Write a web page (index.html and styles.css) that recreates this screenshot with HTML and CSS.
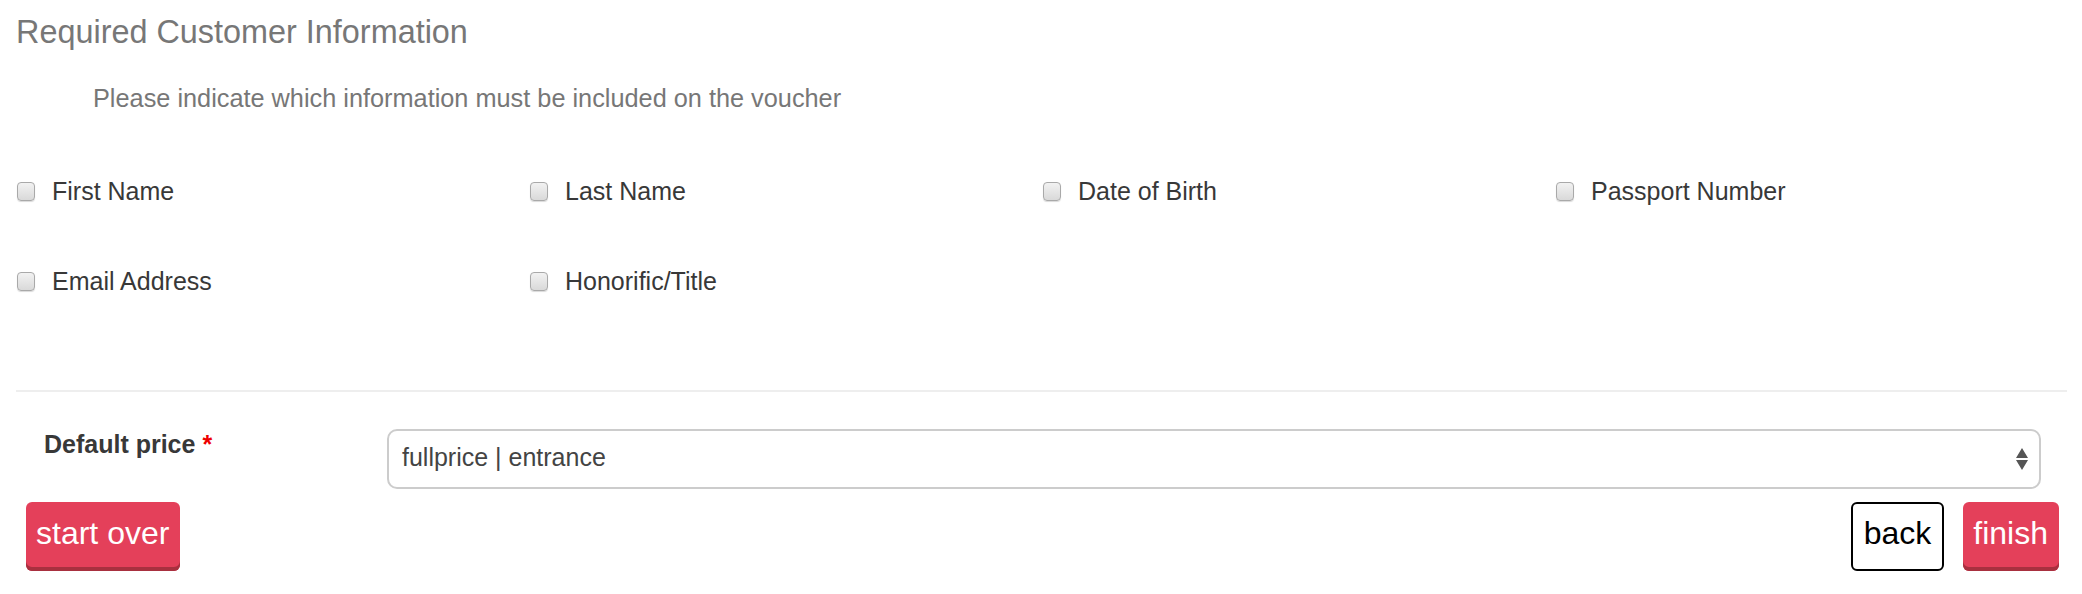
FILE: index.html
```html
<!DOCTYPE html>
<html>
<head>
<meta charset="utf-8">
<link rel="stylesheet" href="styles.css">
</head>
<body>
<div class="page">
  <h3 class="title">Required Customer Information</h3>
  <p class="subtitle">Please indicate which information must be included on the voucher</p>
  <div class="fields">
    <label class="field"><input type="checkbox" class="cb"><span>First Name</span></label>
    <label class="field"><input type="checkbox" class="cb"><span>Last Name</span></label>
    <label class="field"><input type="checkbox" class="cb"><span>Date of Birth</span></label>
    <label class="field"><input type="checkbox" class="cb"><span>Passport Number</span></label>
    <label class="field"><input type="checkbox" class="cb"><span>Email Address</span></label>
    <label class="field"><input type="checkbox" class="cb"><span>Honorific/Title</span></label>
  </div>
  <hr class="divider">
  <div class="price-row">
    <div class="price-label">Default price <span class="req">*</span></div>
    <div class="select">
      <span class="select-text">fullprice | entrance</span>
      <svg class="arrows" width="12" height="22" viewBox="0 0 12 22"><path d="M6 0 L12 10 L0 10 Z M0 12 L12 12 L6 22 Z" fill="#555"/></svg>
    </div>
  </div>
  <div class="actions">
    <button class="btn btn-red">start over</button>
    <div class="actions-right">
      <button class="btn btn-back">back</button>
      <button class="btn btn-red">finish</button>
    </div>
  </div>
</div>
</body>
</html>
```
FILE: styles.css
```css
html, body {
  margin: 0;
  padding: 0;
  background: #fff;
}
body {
  font-family: "Liberation Sans", Arial, sans-serif;
  color: #333;
}
.page {
  padding: 0 15px 0 16px;
}
.title {
  margin: 12px 0 0 0;
  font-size: 32.4px;
  line-height: 40px;
  font-weight: normal;
  color: #777;
}
.subtitle {
  margin: 31px 0 0 77px;
  font-size: 25.3px;
  line-height: 30px;
  color: #777;
}
.fields {
  display: grid;
  grid-template-columns: repeat(4, 513px);
  row-gap: 60px;
  margin-top: 63px;
}
.field {
  display: flex;
  align-items: center;
  height: 30px;
  font-size: 25px;
  line-height: 30px;
  color: #383838;
}
.cb {
  appearance: none;
  -webkit-appearance: none;
  margin: 0 17px 0 1px;
  width: 18px;
  height: 19px;
  border: 1px solid #a9a9a9;
  border-radius: 4px;
  background: linear-gradient(#f2f2f2, #d9d9d9);
  box-shadow: 0 1px 1px rgba(0,0,0,0.15);
  flex: none;
}
.divider {
  margin: 94px 0 0 0;
  border: 0;
  border-top: 2px solid #eeeeee;
  height: 0;
}
.price-row {
  display: flex;
  align-items: flex-start;
  margin-top: 37px;
}
.price-label {
  width: 343px;
  padding-left: 28px;
  font-size: 25px;
  line-height: 30px;
  font-weight: bold;
  color: #383838;
}
.req {
  color: #e00;
}
.select {
  flex: 1;
  margin-right: 26px;
  height: 56px;
  border: 2px solid #cccccc;
  border-radius: 10px;
  display: flex;
  align-items: center;
  justify-content: space-between;
  padding: 0 11px 0 13px;
  box-sizing: content-box;
}
.select-text {
  font-size: 25px;
  line-height: 30px;
  color: #444;
  margin-bottom: 4px;
}
.arrows {
  display: block;
}
.actions {
  display: flex;
  justify-content: space-between;
  margin-top: 13px;
  padding: 0 8px 0 10px;
}
.actions-right {
  display: flex;
  gap: 19px;
}
.btn {
  font-family: "Liberation Sans", Arial, sans-serif;
  font-size: 32px;
  height: 69px;
  line-height: 62px;
  padding: 0 10px 7px 10px;
  border-radius: 6px;
  border: 0;
  cursor: pointer;
}
.btn-red {
  background: #e4405a;
  color: #fff;
  box-shadow: inset 0 -4px 0 #a8303f;
  padding: 0 11px 7px 10px;
}
.btn-back {
  background: #fff;
  color: #000;
  border: 2px solid #000;
  line-height: 58px;
  padding: 0 11px 7px 11px;
}
```
